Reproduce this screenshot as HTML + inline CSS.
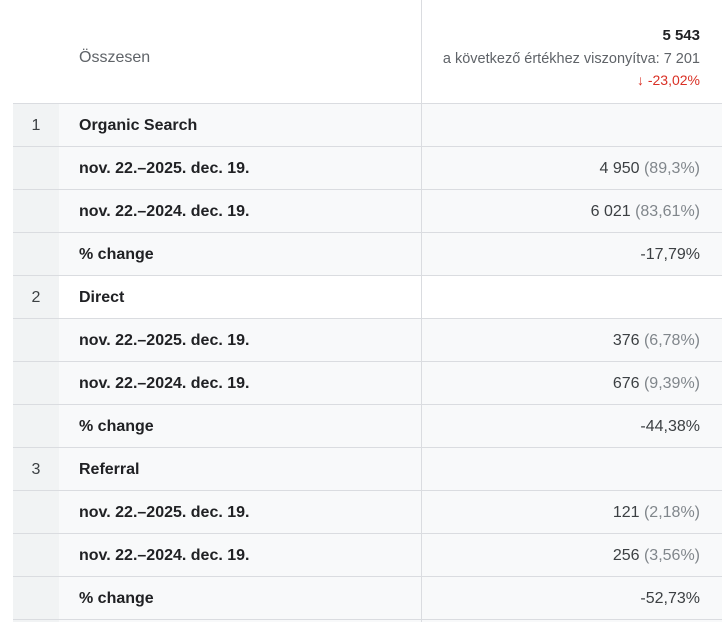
<!DOCTYPE html>
<html><head><meta charset="utf-8"><style>
html,body{margin:0;width:722px;height:622px;overflow:hidden}
body{background:#fff;font-family:"Liberation Sans",Arial,sans-serif;position:relative;color:#202124}
.vl{position:absolute;left:421px;top:0;width:1px;height:622px;background:#dadce0}
.row{position:absolute;left:13px;width:709px;height:42px;border-top:1px solid #dadce0;background:#f8f9fa}
.row.w{background:#fff}
.idx{position:absolute;left:0;top:0;width:46px;height:42px;background:#f1f3f4;font-size:16px;line-height:44px;text-align:center;color:#3c4043}
.lbl{position:absolute;left:66px;top:0;line-height:44px;font-size:16px;font-weight:bold;color:#202124}
.val{position:absolute;right:22px;top:0;line-height:44px;font-size:16px;color:#3c4043}
.val span{color:#80868b}
</style></head><body>
<div style="position:absolute;left:79px;top:49px;font-size:16px;color:#5f6368">Összesen</div>
<div style="position:absolute;right:22px;top:26px;text-align:right">
<div style="font-size:15px;font-weight:bold;color:#202124;line-height:20px">5 543</div>
<div style="font-size:14.5px;color:#5f6368;line-height:22px;margin-top:2px">a következő értékhez viszonyítva: 7 201</div>
<div style="font-size:14px;color:#d93025;line-height:20px">↓ -23,02%</div>
</div>
<div class="row" style="top:103px"><div class="idx">1</div><div class="lbl">Organic Search</div></div>
<div class="row" style="top:146px"><div class="idx"></div><div class="lbl">nov. 22.–2025. dec. 19.</div><div class="val">4 950 <span>(89,3%)</span></div></div>
<div class="row" style="top:189px"><div class="idx"></div><div class="lbl">nov. 22.–2024. dec. 19.</div><div class="val">6 021 <span>(83,61%)</span></div></div>
<div class="row" style="top:232px"><div class="idx"></div><div class="lbl">% change</div><div class="val">-17,79%</div></div>
<div class="row w" style="top:275px"><div class="idx">2</div><div class="lbl">Direct</div></div>
<div class="row" style="top:318px"><div class="idx"></div><div class="lbl">nov. 22.–2025. dec. 19.</div><div class="val">376 <span>(6,78%)</span></div></div>
<div class="row" style="top:361px"><div class="idx"></div><div class="lbl">nov. 22.–2024. dec. 19.</div><div class="val">676 <span>(9,39%)</span></div></div>
<div class="row" style="top:404px"><div class="idx"></div><div class="lbl">% change</div><div class="val">-44,38%</div></div>
<div class="row" style="top:447px"><div class="idx">3</div><div class="lbl">Referral</div></div>
<div class="row" style="top:490px"><div class="idx"></div><div class="lbl">nov. 22.–2025. dec. 19.</div><div class="val">121 <span>(2,18%)</span></div></div>
<div class="row" style="top:533px"><div class="idx"></div><div class="lbl">nov. 22.–2024. dec. 19.</div><div class="val">256 <span>(3,56%)</span></div></div>
<div class="row" style="top:576px"><div class="idx"></div><div class="lbl">% change</div><div class="val">-52,73%</div></div>
<div class="row" style="top:619px;height:2px"><div class="idx" style="height:2px"></div></div>
<div class="vl"></div>
</body></html>
